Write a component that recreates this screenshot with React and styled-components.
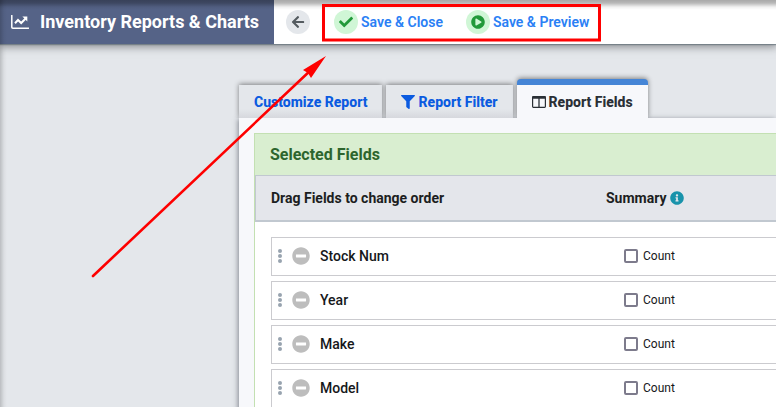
import React from "react";
import styled, { createGlobalStyle } from "styled-components";
import {
  FaArrowLeft,
  FaCheck,
  FaFilter,
  FaInfoCircle,
  FaMinusCircle,
  FaPlayCircle,
} from "react-icons/fa";

const GlobalStyle = createGlobalStyle`
  *, *::before, *::after { box-sizing: border-box; }
  body {
    margin: 0;
    overflow: hidden;
    background: #e4e7eb;
    color: #212529;
    font-family: Roboto, "Liberation Sans", sans-serif;
  }
  button, input { font: inherit; margin: 0; }
  svg { display: block; flex: none; }
`;

const Page = styled.div`
  position: relative;
  min-height: 100vh;
`;

const EdgeShade = styled.div`
  position: absolute;
  inset: 0;
  pointer-events: none;
  background:
    linear-gradient(rgba(0, 0, 0, 0.34), rgba(0, 0, 0, 0.28) 3px, rgba(0, 0, 0, 0.06) 7px, transparent 10px),
    linear-gradient(90deg, rgba(0, 0, 0, 0.18), rgba(0, 0, 0, 0.04) 4px, transparent 7px);
`;

const Header = styled.header`
  position: relative;
  display: flex;
  align-items: stretch;
  height: 44px;
  background: #fff;
  box-shadow: 0 1px 1px rgba(90, 105, 115, 0.6), 0 2px 8px 1px rgba(50, 52, 56, 0.5);
`;

const Brand = styled.h1`
  display: flex;
  align-items: center;
  gap: 11px;
  margin: 0;
  padding: 0 15px 0 11px;
  background: #556387;
  color: #fff;
  font-size: 18px;
  line-height: 24px;
  font-weight: 700;
  white-space: nowrap;
`;

const Actions = styled.nav`
  display: flex;
  align-items: center;
  padding-left: 12px;
`;

const Action = styled.button`
  display: flex;
  align-items: center;
  gap: 3px;
  margin-right: ${(p) => p.$after}px;
  padding: 0;
  border: 0;
  background: none;
  color: #2a80f5;
  font-size: 14px;
  line-height: 24px;
  font-weight: 600;
  white-space: nowrap;
  cursor: pointer;
`;

const Disc = styled.span`
  display: grid;
  place-items: center;
  width: 24px;
  height: 24px;
  border-radius: 50%;
  background: ${(p) => (p.$neutral ? "#e4e7eb" : "#d0f6d6")};
  color: ${(p) => (p.$neutral ? "#545b60" : "#22993a")};
`;

const Main = styled.main`
  margin: 35px 0 0 239px;
`;

const Tabs = styled.div`
  display: flex;
  align-items: flex-end;
  gap: 4px;
`;

const Tab = styled.button`
  position: relative;
  z-index: ${(p) => (p.$active ? 1 : 0)};
  display: flex;
  align-items: center;
  gap: 3px;
  height: ${(p) => (p.$active ? 39 : 33)}px;
  padding: 0 15px;
  border: 0;
  border-top: ${(p) => (p.$active ? "6px solid #4585d6" : "0")};
  border-radius: ${(p) => (p.$active ? "4px 4px 0 0" : "0")};
  background: ${(p) =>
    p.$active ? "#f7f8fb" : "linear-gradient(#e4e7eb 24px, #d6d8dd)"};
  color: ${(p) => (p.$active ? "#2b3036" : "#0b5be0")};
  box-shadow: 0 -1px 5px rgba(0, 0, 0, 0.45);
  clip-path: inset(-8px -8px 0 -8px);
  font-size: 14px;
  line-height: 20px;
  font-weight: 800;
  white-space: nowrap;
  cursor: pointer;
`;

const Panel = styled.section`
  padding: 15px 0 0 15px;
  background: #f7f8fb;
  box-shadow: -1px 1px 5px rgba(40, 45, 60, 0.5);
`;

const Card = styled.div`
  border: 1px solid #c3e0b2;
  border-right: 0;
  background: #fff;
`;

const CardTitle = styled.h2`
  margin: 0;
  padding: 10px 15px;
  background: #d9eed0;
  color: #2d652e;
  font-size: 16px;
  line-height: 21px;
  font-weight: 700;
`;

const Columns = styled.div`
  display: grid;
  grid-template-columns: 335px 1fr;
  align-items: center;
  height: 47px;
  padding-left: 15px;
  border: 1px solid #c1c8d0;
  border-width: 1px 0 2px 1px;
  background: #e4e6eb;
  color: #1c1e21;
  font-size: 14px;
  line-height: 20px;
  font-weight: 700;
`;

const Heading = styled.div`
  display: flex;
  align-items: center;
  gap: 3px;
`;

const InfoButton = styled.button`
  padding: 0;
  border: 0;
  background: none;
  color: #1993ab;
`;

const List = styled.ul`
  display: grid;
  gap: 5px;
  margin: 0;
  padding: 15px 0 15px 16px;
  list-style: none;
`;

const Row = styled.li`
  display: grid;
  grid-template-columns: 352px 1fr;
  align-items: center;
  height: 39px;
  border: 1px solid #cbcbcf;
  border-right: 0;
`;

const Field = styled.div`
  display: flex;
  align-items: center;
  padding: 0 0 2px 6px;
  color: #16181b;
  font-size: 14px;
  line-height: 20px;
  font-weight: 500;
`;

const RemoveButton = styled.button`
  margin: 0 10px;
  padding: 0;
  border: 0;
  background: none;
  color: #bdbdbd;
  cursor: pointer;
`;

const Check = styled.label`
  display: flex;
  align-items: center;
  gap: 5px;
  padding-bottom: 1px;
  color: #16181b;
  font-size: 12px;
  line-height: 20px;
`;

const CheckBox = styled.input`
  appearance: none;
  width: 14px;
  height: 14px;
  border: 2px solid #7d7b8c;
  border-radius: 2px;
  background: #fff;
  &:checked { background: #7d7b8c; }
`;

const Annotation = styled.svg`
  position: absolute;
  top: 0;
  left: 0;
  pointer-events: none;
`;

const ChartIcon = () => (
  <svg width="18" height="14" viewBox="0 0 18 14" fill="none" stroke="currentColor" aria-hidden="true">
    <path d="M0.8 0.5 V12.3 Q0.8 13.2 1.8 13.2 H17.6" strokeWidth="1.5" strokeLinecap="round" />
    <path d="M4 8.2 L7 5 L10.2 8 L14.4 3.8" strokeWidth="2" />
    <path d="M11.4 1.6 H16.3 V6.5 Z" fill="currentColor" stroke="none" />
  </svg>
);

const ColumnsIcon = () => (
  <svg width="14" height="12" viewBox="0 0 14 12" fill="none" stroke="currentColor" aria-hidden="true">
    <rect x="0.6" y="0.6" width="12.8" height="10.8" rx="0.8" strokeWidth="1.2" />
    <path d="M0.5 1.5 H13.5" strokeWidth="2.4" />
    <path d="M7 2 V11.5" strokeWidth="1.3" />
  </svg>
);

const Grip = () => (
  <svg width="4" height="14" viewBox="0 0 4 14" fill="#98a3af" aria-hidden="true">
    <circle cx="2" cy="2" r="2" />
    <circle cx="2" cy="7" r="2" />
    <circle cx="2" cy="12" r="2" />
  </svg>
);

const fields = ["Stock Num", "Year", "Make", "Model"];

export default function App() {
  return (
    <Page>
      <GlobalStyle />
      <Header>
        <Brand>
          <ChartIcon />
          Inventory Reports &amp; Charts
        </Brand>
        <Actions>
          <Action $after={24} aria-label="Back">
            <Disc $neutral>
              <FaArrowLeft size={14} />
            </Disc>
          </Action>
          <Action $after={23}>
            <Disc>
              <FaCheck size={14} />
            </Disc>
            Save &amp; Close
          </Action>
          <Action $after={0}>
            <Disc>
              <FaPlayCircle size={14} />
            </Disc>
            Save &amp; Preview
          </Action>
        </Actions>
      </Header>
      <Main>
        <Tabs role="tablist">
          <Tab role="tab">Customize Report</Tab>
          <Tab role="tab">
            <FaFilter size={14} />
            Report Filter
          </Tab>
          <Tab role="tab" $active aria-selected="true">
            <ColumnsIcon />
            Report Fields
          </Tab>
        </Tabs>
        <Panel>
          <Card>
            <CardTitle>Selected Fields</CardTitle>
            <Columns>
              <Heading>Drag Fields to change order</Heading>
              <Heading>
                Summary
                <InfoButton aria-label="About summary">
                  <FaInfoCircle size={14} />
                </InfoButton>
              </Heading>
            </Columns>
            <List>
              {fields.map((name) => (
                <Row key={name}>
                  <Field>
                    <Grip />
                    <RemoveButton aria-label={`Remove ${name}`}>
                      <FaMinusCircle size={18} />
                    </RemoveButton>
                    {name}
                  </Field>
                  <Check>
                    <CheckBox type="checkbox" />
                    Count
                  </Check>
                </Row>
              ))}
            </List>
          </Card>
        </Panel>
      </Main>
      <EdgeShade />
      <Annotation width="610" height="290" viewBox="0 0 610 290" fill="none" aria-hidden="true">
        <rect x="323.5" y="5.5" width="276" height="34.5" stroke="#fe0000" strokeWidth="3" />
        <path d="M93 276 L312 69" stroke="#fe0000" strokeWidth="2.6" strokeLinecap="round" />
        <path d="M326 56 L311 78 L308 73 L303 70 Z" fill="#fe0000" />
      </Annotation>
    </Page>
  );
}
